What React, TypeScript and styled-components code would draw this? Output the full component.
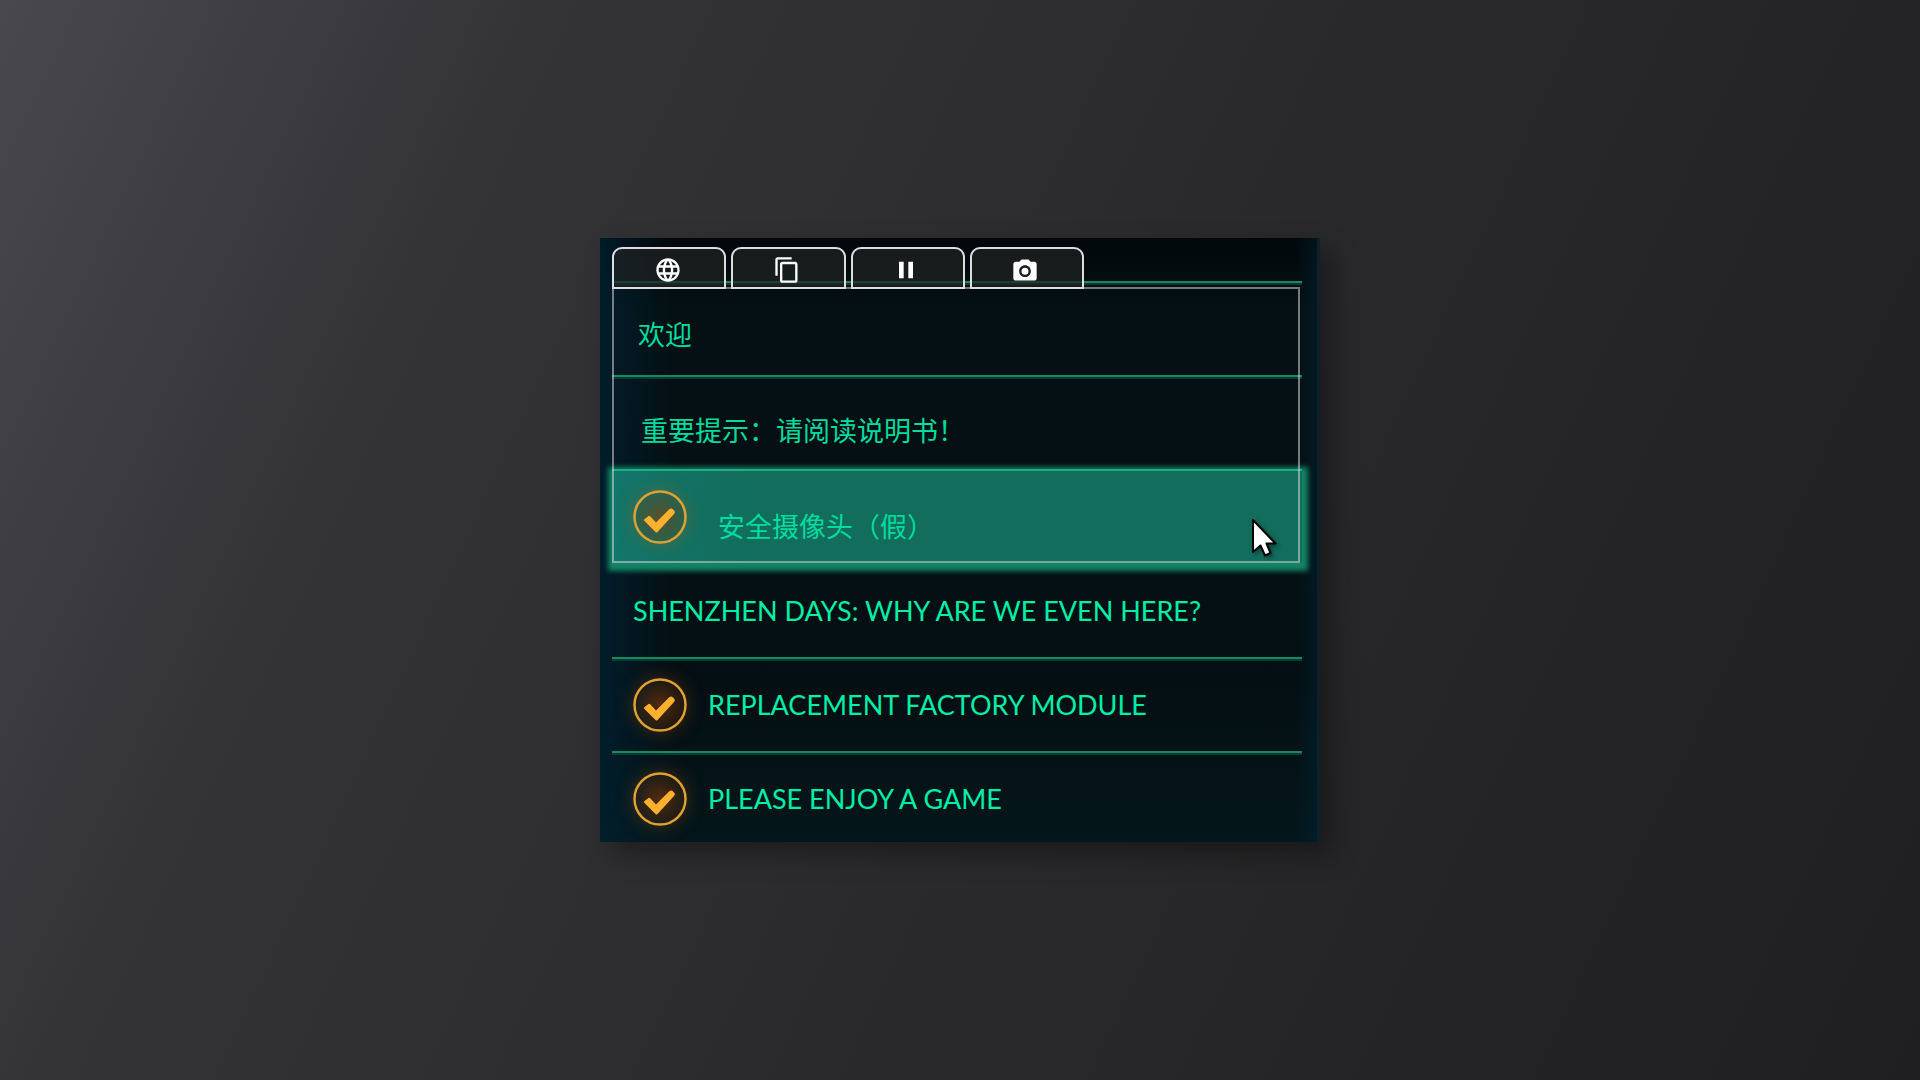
import React from "react";
import styled, { createGlobalStyle } from "styled-components";

const GlobalStyle = createGlobalStyle`
  *, *::before, *::after { box-sizing: border-box; }
  body { margin: 0; font-family: Lato, "Noto Sans CJK SC", sans-serif; }
  button { font: inherit; color: inherit; background: none; border: 0; padding: 0; cursor: pointer; }
  ul { list-style: none; margin: 0; padding: 0; }
`;

const Page = styled.main`
  min-height: 100vh;
  display: grid;
  place-items: center;
  background: linear-gradient(115deg, #49484d 0%, #343437 22%, #29292b 58%, #1f1f21 100%);
`;

const Panel = styled.section`
  position: relative;
  display: grid;
  width: 720px;
  max-width: 100%;
  height: 604px;
  overflow: hidden;
  padding: 9px 15px 0 12px;
  border-right: 3px solid #0e212b;
  background:
    linear-gradient(90deg, rgba(0, 33, 50, 0.75), rgba(0, 33, 50, 0) 10%, rgba(0, 33, 50, 0) 97%, rgba(0, 40, 56, 0.4)),
    linear-gradient(180deg, #02080b 0%, #041013 12%, #040f13 75%, #04161b 100%);
`;

const PanelShadow = styled.div`
  box-shadow: 12px 12px 24px rgba(0, 0, 0, 0.34);
`;

const MailList = styled.ul`
  grid-area: 1 / 1;
  margin-top: 34px;
`;

const MailItem = styled.li<{ $selected?: boolean }>`
  position: relative;
  z-index: ${(p) => (p.$selected ? 1 : 0)};
  height: 94px;
  border-top: 2px solid ${(p) => (p.$selected ? "#22ac80" : "#168a5f")};
  background: ${(p) => (p.$selected ? "linear-gradient(90deg, #12766a, #126d5c 20%)" : "none")};
  box-shadow: ${(p) => (p.$selected ? "1px 3px 5px 5px #128465" : "inset 0 2px #063c32")};
`;

const MailButton = styled.button`
  display: flex;
  align-items: center;
  gap: 21px;
  width: 100%;
  height: 100%;
  padding-left: 21px;
  color: #00efa6;
  font-size: 27px;
  line-height: 36px;
  text-align: left;
`;

const Badge = styled.svg`
  flex: none;
  width: 54px;
  height: 54px;
  overflow: visible;
  border-radius: 50%;
  box-shadow: 0 0 18px rgba(190, 85, 10, 0.35);
`;

const Overlay = styled.div`
  grid-area: 1 / 1;
  position: relative;
  z-index: 2;
  margin-right: 2px;
  pointer-events: none;
`;

const Tabs = styled.div`
  display: grid;
  grid-template-columns: repeat(4, 1fr);
  gap: 5px;
  width: 472px;
`;

const Tab = styled.button`
  display: grid;
  place-items: center;
  height: 42px;
  padding: 3px 3px 0 0;
  border: 2px solid #dddcde;
  border-radius: 10px 10px 0 0;
  background: rgba(32, 34, 35, 0.72);
  color: #ffffff;
  pointer-events: auto;
`;

const TabIcon = styled.svg`
  width: 28px;
  height: 28px;
  fill: currentColor;
`;

const Frame = styled.ul`
  height: 276px;
  margin-top: -2px;
  border: 2px solid rgba(235, 225, 232, 0.5);
`;

const Caption = styled.li<{ $inset: number }>`
  height: 96px;
  padding-left: ${(p) => p.$inset}px;
  color: #00dc9e;
  font-family: "Noto Sans CJK SC", sans-serif;
  font-size: 27px;
  line-height: 90px;
  white-space: nowrap;
`;

const Pointer = styled.svg`
  position: absolute;
  z-index: 3;
  left: 651px;
  top: 280px;
  width: 26px;
  height: 40px;
  overflow: visible;
  pointer-events: none;
  filter: drop-shadow(2px 2px 2px rgba(0, 0, 0, 0.4));
`;

const CheckBadge = () => (
  <Badge viewBox="0 0 54 54" aria-hidden="true">
    <defs>
      <radialGradient id="ember">
        <stop offset="0" stopColor="#8a3a06" stopOpacity="0.6" />
        <stop offset="1" stopColor="#6a3208" stopOpacity="0.25" />
      </radialGradient>
    </defs>
    <circle cx="27" cy="27" r="25.500" fill="url(#ember)" stroke="#e0a032" strokeWidth="2.500" />
    <path
      d="M11 29.500L15.500 26Q16.500 25.500 17.500 26.500L23 32.500L36 19.500Q38 18 39.500 19L41.500 21Q42.500 22.500 41 24L24.500 42Q23.500 43 22.500 42L11.500 31Q10.500 30 11 29.500Z"
      fill="#ffb02e"
    />
  </Badge>
);

const tabs = [
  {
    label: "Language",
    path: "M11.990 2C6.470 2 2 6.480 2 12s4.470 10 9.990 10C17.520 22 22 17.520 22 12S17.520 2 11.990 2zm6.930 6h-2.950c-.32-1.250-.78-2.450-1.380-3.560 1.840.63 3.370 1.910 4.330 3.560zM12 4.040c.83 1.200 1.480 2.530 1.910 3.960h-3.820c.43-1.430 1.080-2.760 1.910-3.960zM4.260 14C4.100 13.360 4 12.690 4 12s.1-1.360.26-2h3.380c-.08.66-.14 1.320-.14 2 0 .68.06 1.340.14 2H4.260zm.82 2h2.950c.32 1.250.78 2.450 1.380 3.560-1.840-.63-3.370-1.900-4.330-3.560zm2.950-8H5.080c.96-1.660 2.490-2.930 4.330-3.560C8.810 5.550 8.350 6.750 8.030 8zM12 19.960c-.83-1.200-1.480-2.530-1.910-3.960h3.820c-.43 1.430-1.080 2.760-1.910 3.960zM14.340 14H9.660c-.09-.66-.16-1.320-.16-2 0-.68.07-1.350.16-2h4.680c.09.65.16 1.320.16 2 0 .68-.07 1.340-.16 2zm.25 5.560c.6-1.110 1.060-2.310 1.380-3.560h2.950c-.96 1.650-2.490 2.930-4.330 3.560zM16.360 14c.08-.66.14-1.320.14-2 0-.68-.06-1.340-.14-2h3.380c.16.64.26 1.310.26 2s-.1 1.360-.26 2h-3.380z",
  },
  {
    label: "Copy",
    path: "M16 1H4c-1.100 0-2 .9-2 2v14h2V3h12V1zm3 4H8c-1.100 0-2 .9-2 2v14c0 1.100.9 2 2 2h11c1.100 0 2-.9 2-2V7c0-1.100-.9-2-2-2zm0 16H8V7h11v14z",
  },
  { label: "Pause", path: "M6 19h4V5H6v14zm8-14v14h4V5h-4z" },
  {
    label: "Capture",
    path: "M20 5h-3.170L15 3H9L7.170 5H4c-1.100 0-2 .9-2 2v12c0 1.100.9 2 2 2h16c1.100 0 2-.9 2-2V7c0-1.100-.9-2-2-2zm-8 13c-2.760 0-5-2.240-5-5s2.240-5 5-5 5 2.240 5 5-2.240 5-5 5z M12 10a3 3 0 1 0 0 6a3 3 0 1 0 0-6z",
  },
];

const captions = [
  { text: "欢迎", inset: 24 },
  { text: "重要提示：请阅读说明书！", inset: 27 },
  { text: "安全摄像头（假）", inset: 104 },
];

const mails = [
  { label: "欢迎" },
  { label: "重要提示：请阅读说明书！" },
  { label: "安全摄像头（假）", done: true, selected: true },
  { title: "SHENZHEN DAYS: WHY ARE WE EVEN HERE?" },
  { title: "REPLACEMENT FACTORY MODULE", done: true },
  { title: "PLEASE ENJOY A GAME", done: true },
];

export default function App() {
  return (
    <Page>
      <GlobalStyle />
      <PanelShadow>
        <Panel>
          <MailList>
            {mails.map((mail, i) => (
              <MailItem key={i} $selected={mail.selected}>
                <MailButton type="button" aria-label={mail.label}>
                  {mail.done && <CheckBadge />}
                  {mail.title && <span>{mail.title}</span>}
                </MailButton>
              </MailItem>
            ))}
          </MailList>
          <Overlay>
            <Tabs>
              {tabs.map((tab) => (
                <Tab key={tab.label} type="button" aria-label={tab.label}>
                  <TabIcon viewBox="0 0 24 24" aria-hidden="true">
                    <path d={tab.path} fillRule="evenodd" />
                  </TabIcon>
                </Tab>
              ))}
            </Tabs>
            <Frame>
              {captions.map((c) => (
                <Caption key={c.text} $inset={c.inset}>
                  {c.text}
                </Caption>
              ))}
            </Frame>
          </Overlay>
          <Pointer viewBox="0 0 26 40" aria-hidden="true">
            <path
              d="M2 2V34L9.500 27.500L14 37.500L19.500 35L15.500 25.500H24.500Z"
              fill="#fff"
              stroke="#000"
              strokeWidth="2"
              strokeLinejoin="round"
            />
          </Pointer>
        </Panel>
      </PanelShadow>
    </Page>
  );
}
